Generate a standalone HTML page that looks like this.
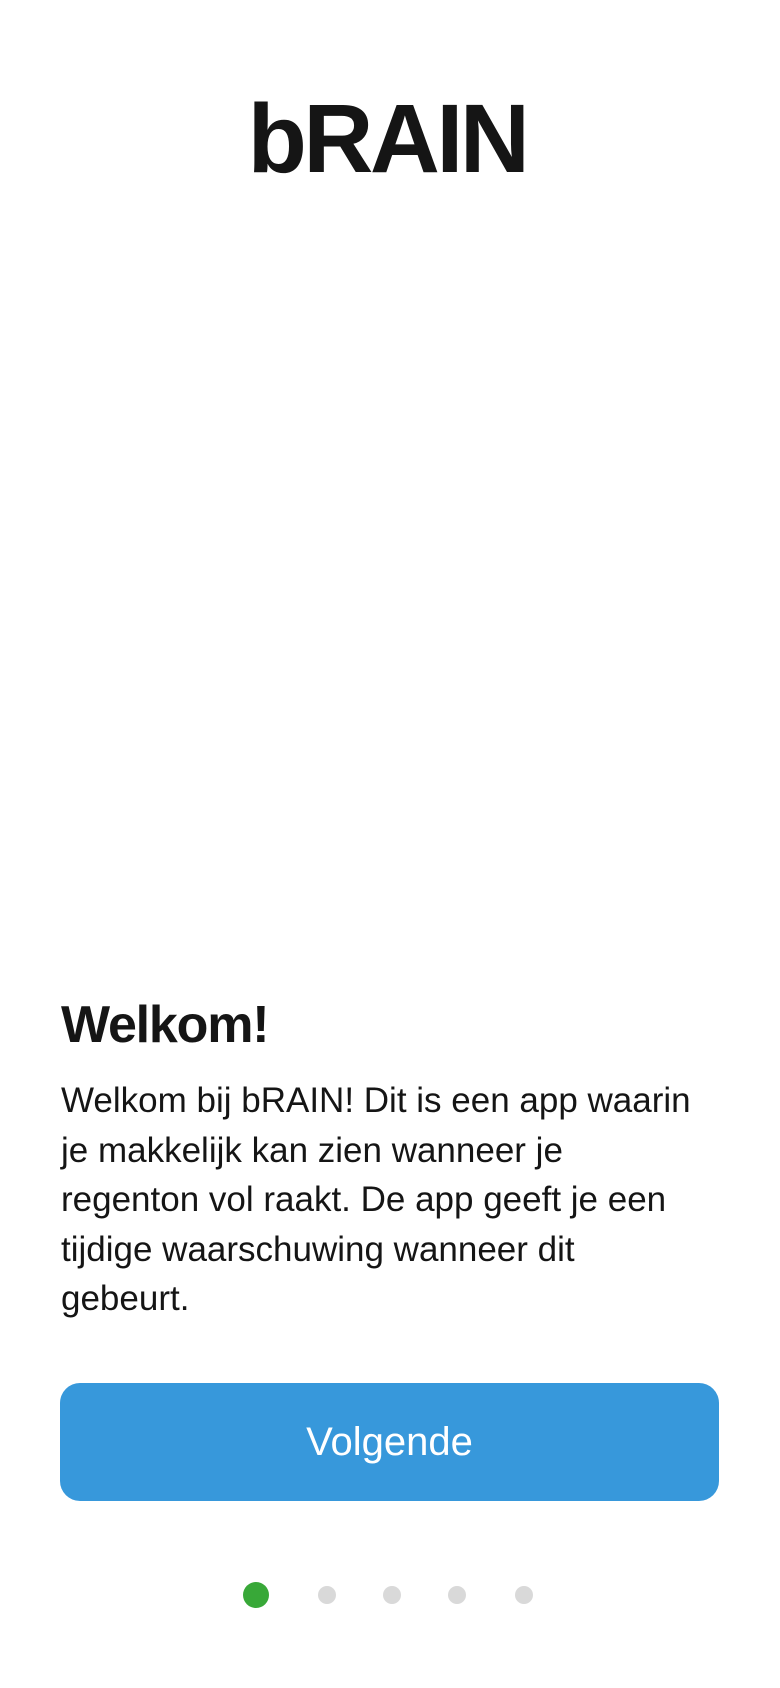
<!DOCTYPE html>
<html><head><meta charset="utf-8"><style>
html,body{margin:0;padding:0;background:#fff;}
body{width:780px;height:1688px;position:relative;overflow:hidden;font-family:"Liberation Sans",sans-serif;color:#151515;}
.logo{position:absolute;left:-3px;width:780px;top:79px;text-align:center;font-weight:bold;font-size:97px;letter-spacing:-3.5px;line-height:120px;}
h1{position:absolute;left:61px;top:990px;margin:0;font-size:52px;font-weight:bold;letter-spacing:-1.2px;line-height:70px;}
.p{position:absolute;left:61px;top:1076px;font-size:35px;line-height:49.5px;white-space:nowrap;letter-spacing:0;}
.btn{position:absolute;left:60px;top:1383px;width:659px;height:118px;background:#3798db;border-radius:20px;color:#fff;font-size:40px;text-align:center;line-height:118px;}
.d{position:absolute;border-radius:50%;background:#d9d9d9;width:18px;height:18px;top:1586px;}
</style></head><body>
<div class="logo">bRAIN</div>
<h1>Welkom!</h1>
<div class="p">Welkom bij bRAIN! Dit is een app waarin<br>je makkelijk kan zien wanneer je<br>regenton vol raakt. De app geeft je een<br>tijdige waarschuwing wanneer dit<br>gebeurt.</div>
<div class="btn">Volgende</div>
<div class="d" style="left:243px;top:1582px;width:26px;height:26px;background:#38a838"></div>
<div class="d" style="left:318px"></div>
<div class="d" style="left:383px"></div>
<div class="d" style="left:448px"></div>
<div class="d" style="left:515px"></div>
</body></html>
